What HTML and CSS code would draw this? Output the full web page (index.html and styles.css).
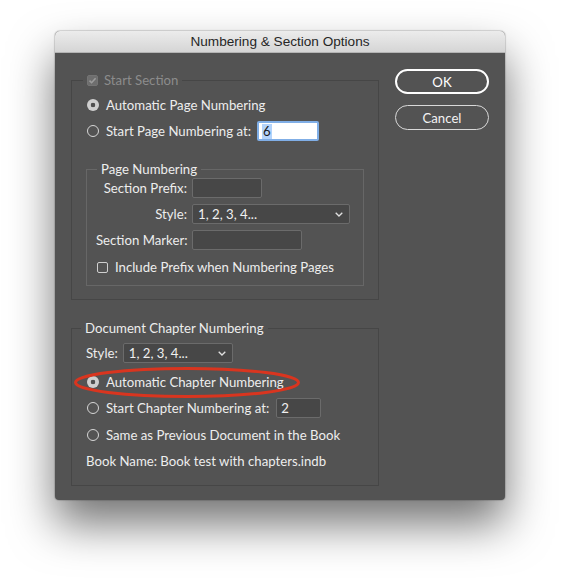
FILE: index.html
```html
<!DOCTYPE html>
<html>
<head>
<meta charset="utf-8">
<link rel="stylesheet" href="styles.css">
</head>
<body>
<div class="stage">
<div class="window">
  <div class="titlebar">Numbering &amp; Section Options</div>
  <div class="body">
    <div class="main">
      <div class="group g1">
        <div class="legend legend-g1 disabled">
          <span class="check check-dis"><svg width="11" height="11" viewBox="0 0 11 11"><path d="M2.5 5.6 L4.6 7.7 L8.6 3.2" fill="none" stroke="#9c9c9c" stroke-width="1.6"/></svg></span>
          Start Section
        </div>
        <div class="row first"><span class="radio on"></span>Automatic Page Numbering</div>
        <div class="row gap"><span class="radio"></span>Start Page Numbering at:<span class="field focus w62"><span class="selected">6</span></span></div>
        <div class="group inner">
          <div class="legend legend-inner">Page Numbering</div>
          <div class="form">
            <span class="lbl">Section Prefix:</span><span class="field w70"></span>
            <span class="lbl">Style:</span><span class="select w158">1, 2, 3, 4...<svg class="chev" width="8" height="5" viewBox="0 0 8 5"><path d="M0.7 0.7 L4 4 L7.3 0.7" fill="none" stroke="#e0e0e0" stroke-width="1.3"/></svg></span>
            <span class="lbl">Section Marker:</span><span class="field w110"></span>
          </div>
          <div class="row chkrow"><span class="check"></span>Include Prefix when Numbering Pages</div>
        </div>
      </div>
      <div class="group g2">
        <div class="legend legend-g2">Document Chapter Numbering</div>
        <div class="row stylerow">Style:<span class="select w110">1, 2, 3, 4...<svg class="chev" width="8" height="5" viewBox="0 0 8 5"><path d="M0.7 0.7 L4 4 L7.3 0.7" fill="none" stroke="#e0e0e0" stroke-width="1.3"/></svg></span></div>
        <div class="row r-auto"><span class="radio on"></span>Automatic Chapter Numbering</div>
        <div class="row r-start"><span class="radio"></span>Start Chapter Numbering at:<span class="field w45 val">2</span></div>
        <div class="row r-same"><span class="radio"></span>Same as Previous Document in the Book</div>
        <div class="row r-book">Book Name: Book test with chapters.indb</div>
        <svg class="annot" width="232" height="37" viewBox="0 0 232 37"><ellipse cx="115" cy="18.5" rx="111.5" ry="14" fill="none" stroke="#d9351f" stroke-width="3"/></svg>
      </div>
    </div>
    <div class="buttons">
      <div class="btn default">OK</div>
      <div class="btn">Cancel</div>
    </div>
  </div>
</div>
</div>
</body>
</html>
```
FILE: styles.css
```css
html, body {
  margin: 0;
  background: #ffffff;
}
body {
  font-family: Lato, "Open Sans", sans-serif;
  font-size: 13.2px;
  color: #ededed;
}
.stage {
  padding: 31px 0 0 55px;
  height: 581px;
  box-sizing: border-box;
  background: #ffffff;
}
.window {
  width: 450px;
  height: 469px;
  background: #535353;
  border-radius: 5px 5px 4px 4px;
  box-shadow: 0 24px 45px 0 rgba(0, 0, 0, 0.55), 0 0 1px 1px rgba(0, 0, 0, 0.15);
  display: flex;
  flex-direction: column;
}
.titlebar {
  height: 22px;
  flex: 0 0 22px;
  box-sizing: border-box;
  background: linear-gradient(#ececec, #d5d5d5);
  border-bottom: 1px solid #b4b4b4;
  border-radius: 5px 5px 0 0;
  color: #262626;
  font-family: "Liberation Sans", Arial, sans-serif;
  font-size: 13.6px;
  line-height: 21px;
  text-align: center;
}
.body {
  display: flex;
  padding: 0 16px;
  gap: 16px;
}
.main {
  width: 308px;
  padding-top: 27px;
  display: flex;
  flex-direction: column;
}
.group {
  border: 1px solid #464646;
  display: flex;
  flex-direction: column;
  align-items: flex-start;
  padding: 0 14px 13px 15px;
  position: relative;
}
.group.inner {
  border-color: #676767;
  margin-top: 28px;
  margin-left: -1px;
  align-self: stretch;
  padding: 0 8px 8px 9px;
}
.g2 {
  margin-top: 28px;
  padding-bottom: 14px;
}
.legend {
  margin-top: -9px;
  height: 16px;
  line-height: 16px;
  padding: 0 4px;
  background: #535353;
  display: flex;
  align-items: center;
  gap: 6px;
}
.legend-g1 { margin-left: -4px; }
.legend-g2 { margin-left: -6px; }
.legend-inner { margin-left: 1px; }
.disabled { color: #8c8c8c; }

.row {
  height: 20px;
  display: flex;
  align-items: center;
  white-space: nowrap;
}
.row.first { margin-top: 7px; }
.row.gap { margin-top: 6px; }

.radio {
  width: 12px;
  height: 12px;
  box-sizing: border-box;
  border: 1px solid #d6d6d6;
  border-radius: 50%;
  margin-right: 7px;
  flex: 0 0 12px;
}
.radio.on {
  border: none;
  background: radial-gradient(circle, #505050 0, #505050 2px, #cfcfcf 2.6px);
}
.check {
  width: 11px;
  height: 11px;
  box-sizing: border-box;
  border: 1px solid #cfcfcf;
  border-radius: 2px;
  flex: 0 0 11px;
  display: block;
}
.check svg { display: block; margin: -1px; }
.check-dis {
  border-color: #747474;
  background: #6e6e6e;
}

.field {
  height: 20px;
  box-sizing: border-box;
  border: 1px solid #6b6b6b;
  border-radius: 2px;
  background: #474747;
  display: inline-flex;
  align-items: center;
  padding-left: 4px;
  color: #f0f0f0;
}
.field.focus {
  margin-left: 6px;
  background: #ffffff;
  border: 2px solid #80aee6;
  padding-left: 3px;
  color: #1a1a1a;
}
.selected {
  background: #b3d3fb;
  padding: 0 1px;
  line-height: 15px;
}
.w62 { width: 62px; }
.w70 { width: 70px; }
.w110 { width: 110px; }
.w158 { width: 158px; }
.w45 { width: 45px; }
.val { margin-left: 7px; }

.select {
  height: 20px;
  box-sizing: border-box;
  border: 1px solid #6b6b6b;
  border-radius: 2px;
  background: #474747;
  display: inline-flex;
  align-items: center;
  justify-content: space-between;
  padding: 0 6px 0 5px;
  color: #f0f0f0;
}
.chev { display: block; }

.form {
  margin-top: 1px;
  display: grid;
  grid-template-columns: 91px auto;
  column-gap: 5px;
  row-gap: 6px;
  align-items: center;
}
.lbl {
  text-align: right;
  white-space: nowrap;
  line-height: 20px;
}
.chkrow { margin-top: 7px; }
.chkrow .check { margin: 0 7px 0 1px; }

.stylerow { margin-top: 7px; margin-left: -1px; }
.stylerow .select { margin-left: 5px; }
.r-auto { margin-top: 9px; }
.r-start { margin-top: 6px; }
.r-same { margin-top: 7px; }
.r-book { margin-top: 6px; margin-left: -1px; }

.annot {
  position: absolute;
  left: 0;
  top: 35px;
}

.buttons {
  margin-top: 16px;
  width: 94px;
  display: flex;
  flex-direction: column;
  gap: 11px;
}
.btn {
  height: 25px;
  box-sizing: border-box;
  border: 1px solid #d9d9d9;
  border-radius: 13px;
  display: flex;
  align-items: center;
  justify-content: center;
  color: #f2f2f2;
  font-size: 13.2px;
}
.btn.default {
  border: 2px solid #ffffff;
  color: #ffffff;
}
```
